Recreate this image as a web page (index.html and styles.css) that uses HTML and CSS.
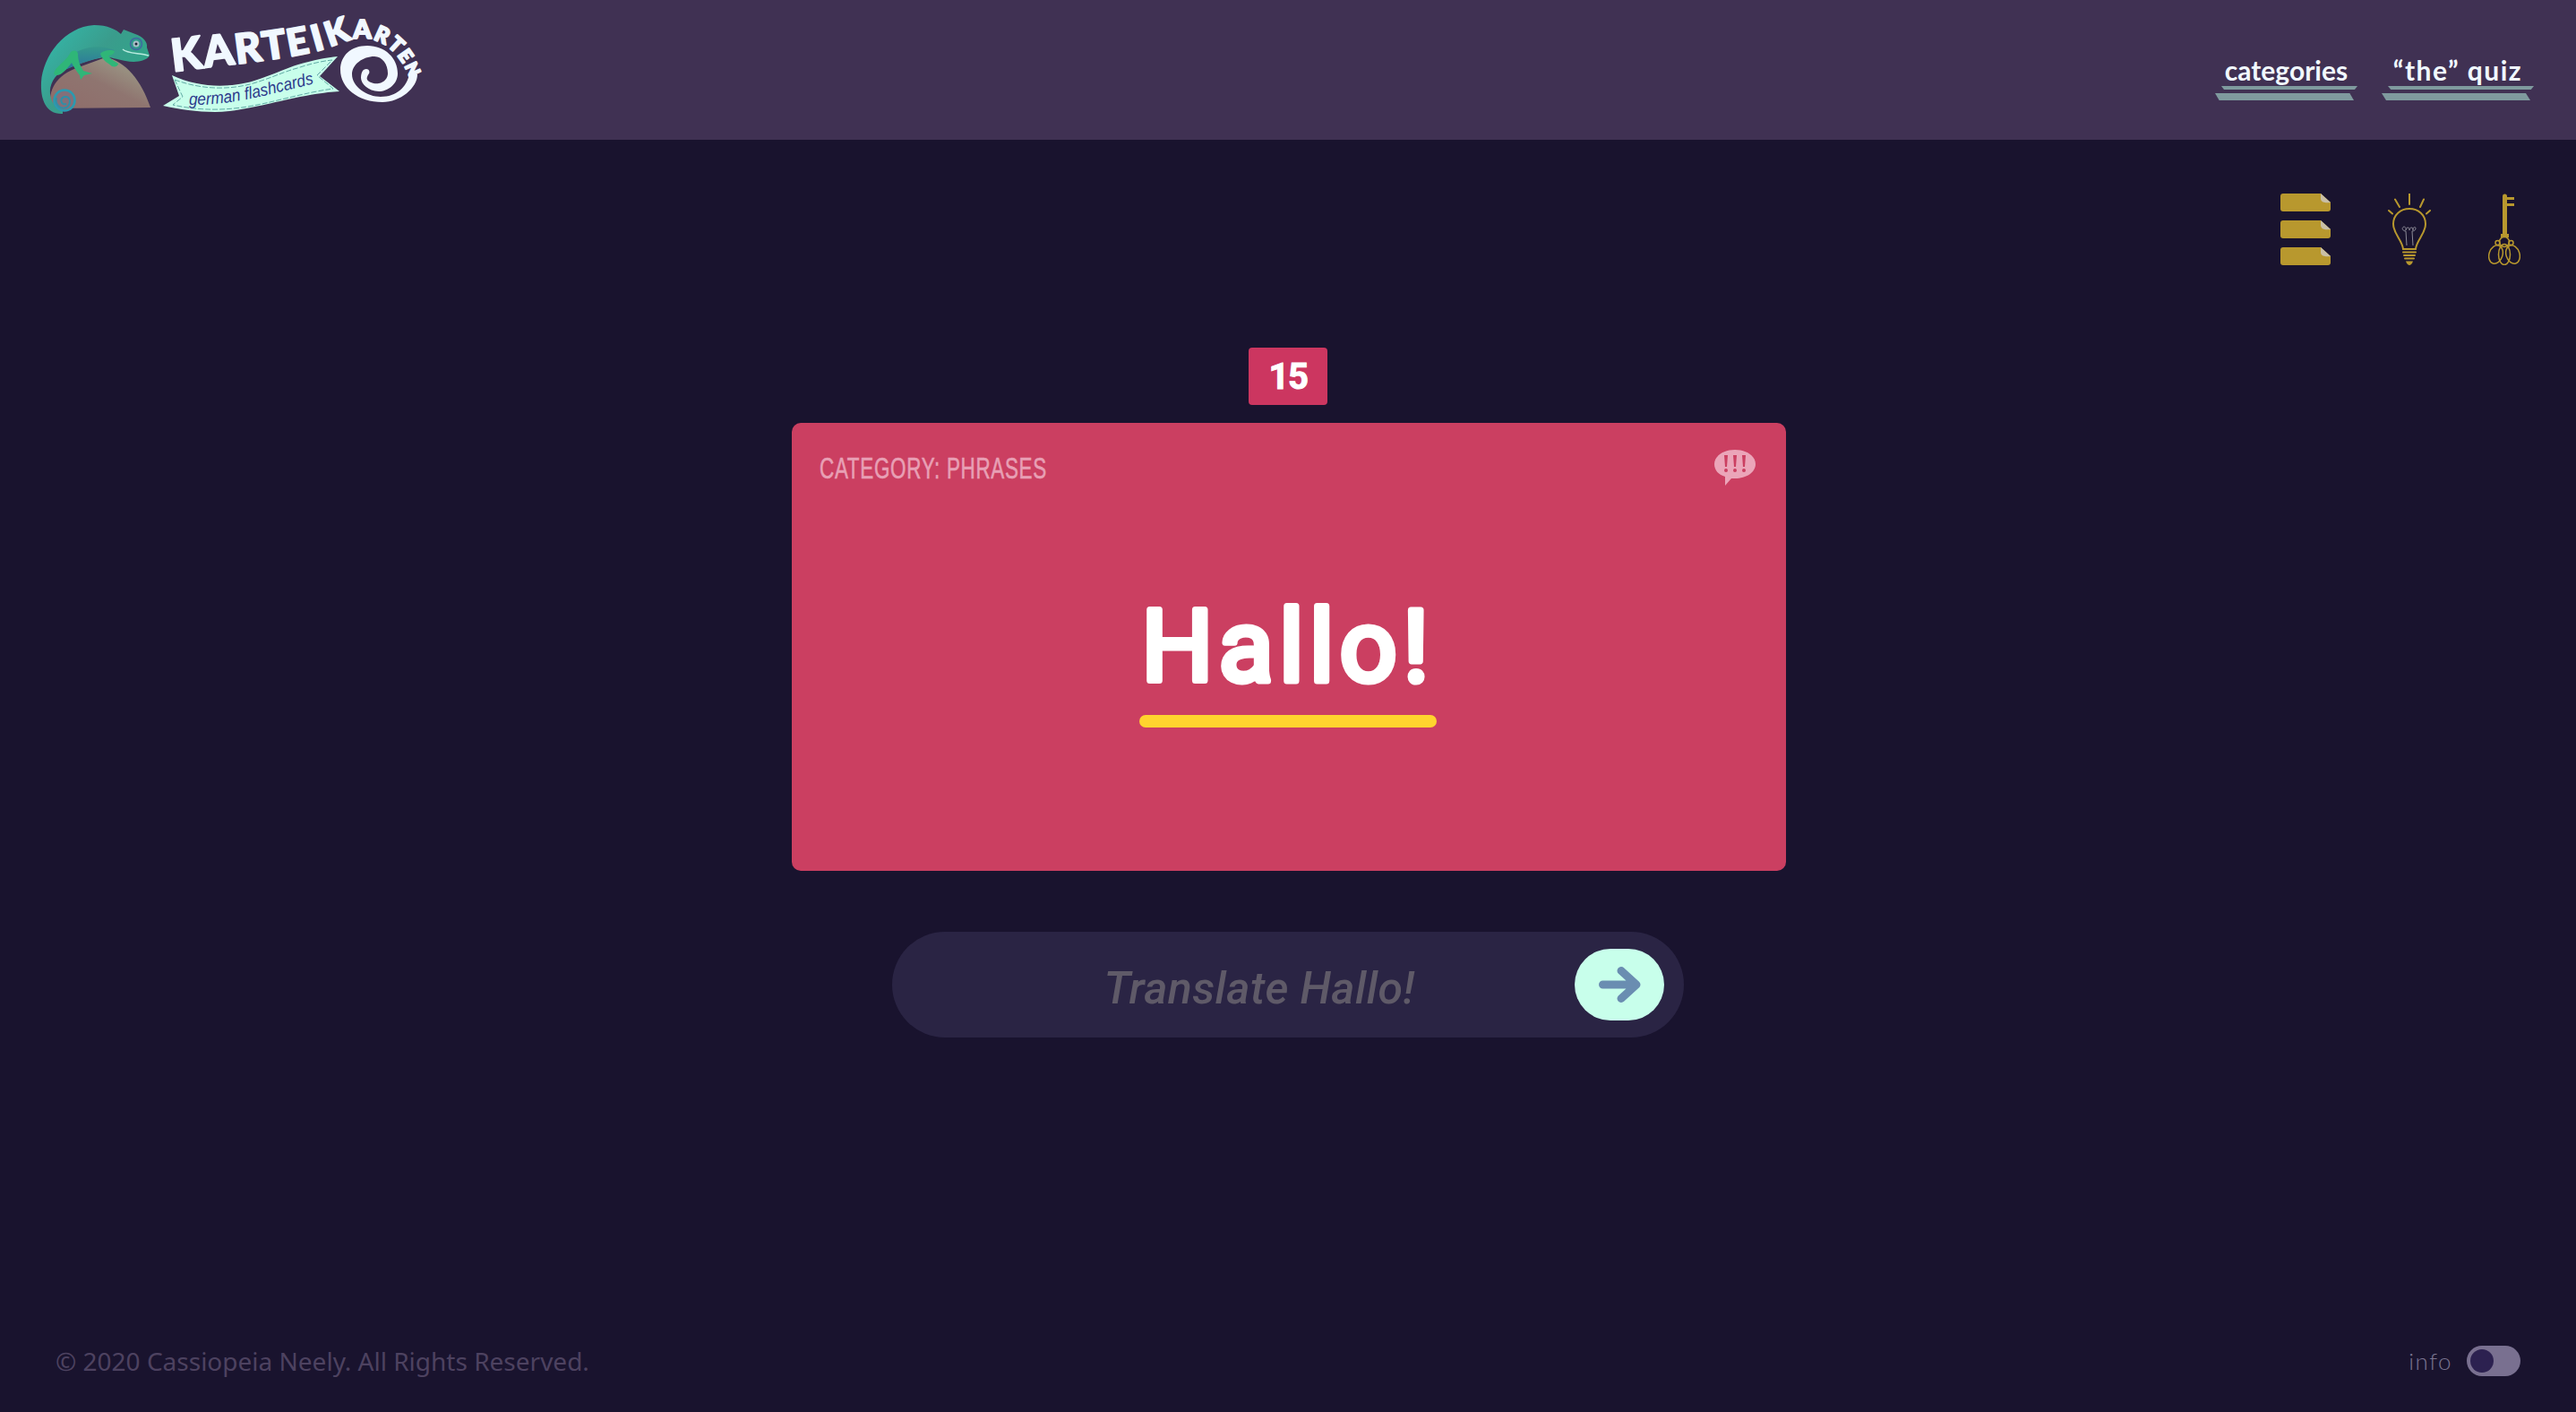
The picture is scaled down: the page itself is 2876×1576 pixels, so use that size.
FILE: index.html
```html
<!DOCTYPE html>
<html lang="de">
<head>
<meta charset="utf-8">
<title>Karteikarten</title>
<link rel="stylesheet" href="styles.css">
</head>
<body>
<header class="site-header">
  <a class="logo" href="#">
    <svg class="logo-svg" viewBox="0 0 520 156" width="520" height="156" aria-label="Karteikarten logo">
      <defs>
        <linearGradient id="rock" x1="0" y1="1" x2="1" y2="0">
          <stop offset="0" stop-color="#8f6c6a"/><stop offset=".5" stop-color="#8f7570"/><stop offset=".75" stop-color="#988f80"/><stop offset="1" stop-color="#8c8070"/>
        </linearGradient>
        <linearGradient id="skin" x1="0" y1="0" x2="1" y2=".7">
          <stop offset="0" stop-color="#33bcae"/><stop offset=".5" stop-color="#3a9c8c"/><stop offset="1" stop-color="#2da888"/>
        </linearGradient>
        <linearGradient id="belly" x1="0" y1="0" x2="0" y2="1">
          <stop offset="0" stop-color="#359a8c"/><stop offset="1" stop-color="#2a6fa0"/>
        </linearGradient>
        <path id="title-path" d="M193 80 C240 74 300 68 340 60 C370 54 380 47 392 45 C415 38 447 48 462 100"/>
        <path id="tag-path" d="M211 117 C260 118 305 104 352 93"/>
      </defs>
      <path class="rock" d="M56 121 C54 100 62 84 88 75 L118 64 C140 68 158 90 168 120 Z"/>
      <path class="chameleon" d="M70 127 C52 128 45 112 46 92 C48 62 72 30 105 28 C120 28 130 33 135 38 L138 33 L151 38 C160 41 165 47 164 53 L167 62 C163 69 150 70 140 68 C128 66 122 63 115 64 C100 67 85 72 72 78 C60 84 55 95 56 105 C57 115 62 120 70 120 Z"/>
      <path class="belly" d="M66 81 C72 56 106 46 128 56 C124 62 118 63 113 64 C100 67 85 72 66 81 Z"/>
      <circle class="tail-curl" cx="72" cy="112" r="11.500"/>
      <path class="tail-line" d="M74 116 C68 118 66 110 72 108 C79 107 80 116 74 120 C66 123 61 115 63 109"/>
      <path class="leg" d="M60 82 C62 74 72 70 78 60 C79 56 86 55 87 60 C87 68 90 74 93 79 L103 82 L94 84 L90 89 L89 84 C84 78 81 72 80 70 C74 78 68 85 62 84 Z"/>
      <path class="leg" d="M112 60 C115 56 125 55 128 57 C128 60 124 62 121 62 C123 66 128 68 132 71 C132 74 128 75 125 74 C120 70 114 67 112 60 Z"/>
      <circle class="eye-ring" cx="152" cy="49" r="6.500"/>
      <circle class="eye-mid" cx="152" cy="49" r="3.500"/>
      <circle class="eye-dot" cx="152" cy="49" r="1.500"/>
      <path class="mouth" d="M137 55 C142 60 155 59 166 62"/>
      <text class="logo-title"><textPath href="#title-path"><tspan font-size="50">K</tspan><tspan font-size="48">A</tspan><tspan font-size="46">R</tspan><tspan font-size="44">T</tspan><tspan font-size="42">E</tspan><tspan font-size="40" dx="4">I</tspan><tspan font-size="38" dx="3">K</tspan><tspan font-size="29">A</tspan><tspan font-size="24">R</tspan><tspan font-size="23">T</tspan><tspan font-size="21">E</tspan><tspan font-size="19" dx="1">N</tspan></textPath></text>
      <path class="spiral" d="M466 83 C466 98 447 114 427 114 C400 114 380 98 380 78 C380 62 392 51 410 51 C430 51 444 65 444 82 C444 94 433 102 423 102 C411 102 403 93 403 87 C403 81 405 77 409 77 C412 77 413 80 412 82 C410 85 409 87 410 89 C412 92 418 94 423 93 C429 92 433 87 433 82 C433 72 427 63 418 63 C405 63 393 72 393 83 C393 97 410 108 425 108 C443 108 454 97 457 83 Z"/>
      <path class="banner" d="M182 118 L200 107 L192 84 C225 100 265 98 293 87 C310 81 320 76 333 72 C350 67 365 64 377 63 L357 85 L379 102 C345 104 310 114 290 118 C270 122 255 125 240 125 C220 125 200 122 182 118 Z"/>
      <path class="banner-stitch" d="M195 89 C230 102 265 100 292 90 C310 84 320 79 332 76 C347 71 360 68 371 67 L354 84 L372 99 C340 103 300 116 270 120 C240 124 215 122 193 117 L204 108 Z"/>
      <text class="logo-tag"><textPath href="#tag-path" textLength="142" lengthAdjust="spacingAndGlyphs">german flashcards</textPath></text>
    </svg>
  </a>
  <nav class="site-nav">
    <a class="nav-link nav-link-categories" href="#">categories</a>
    <a class="nav-link nav-link-quiz" href="#">“the” quiz</a>
  </nav>
</header>

<main class="content">
  <div class="tools">
    <svg class="tool-icon" viewBox="0 0 56 80" width="56" height="80" aria-label="cards">
      <g class="sheet"><path class="sheet-body" d="M3 0H45L56 10V17a3 3 0 0 1-3 3H3a3 3 0 0 1-3-3V3a3 3 0 0 1 3-3z"/><path class="sheet-curl" d="M45 0L56 10C52 10.500 46 11 45 6Z"/></g>
      <g class="sheet" transform="translate(0 30)"><path class="sheet-body" d="M3 0H45L56 10V17a3 3 0 0 1-3 3H3a3 3 0 0 1-3-3V3a3 3 0 0 1 3-3z"/><path class="sheet-curl" d="M45 0L56 10C52 10.500 46 11 45 6Z"/></g>
      <g class="sheet" transform="translate(0 60)"><path class="sheet-body" d="M3 0H45L56 10V17a3 3 0 0 1-3 3H3a3 3 0 0 1-3-3V3a3 3 0 0 1 3-3z"/><path class="sheet-curl" d="M45 0L56 10C52 10.500 46 11 45 6Z"/></g>
    </svg>
    <svg class="tool-icon" viewBox="0 0 48 80" width="48" height="80" aria-label="hint">
      <path class="line" d="M24 0V12M8 6.500L13 15M40 6.500L36 15M1 19L5 22.500M47 19L43 22.500"/>
      <path class="line" d="M17 62C16 52 6 45 6 34C6 24 14 17 24 17C34 17 42 24 42 34C42 45 32 52 31 62Z"/>
      <path class="line" d="M17 65.500H31M18 69H30M19 72.500H29"/>
      <path class="bulb-tip" d="M20 75.500H28C27 79 25 80 24 80C23 80 21 79 20 75.500Z"/>
      <path class="filament" d="M21 58L20 42C17 42 15 39 17 37.500C19 36 21 39 20 41C20 37 25 37 24 41C24 37 29 37 28 41C27 38 31 36 31 39C31 41 29 42 27 42L28 58"/>
    </svg>
    <svg class="tool-icon" viewBox="0 0 36 80" width="36" height="80" aria-label="key">
      <path class="key-solid" d="M16 3a2.500 2.500 0 0 1 5 0V4H29V7H21V11H29V14H21V45H23V49H14V45H16Z"/>
      <g class="key-bow">
        <circle cx="18" cy="54" r="5.500"/><circle cx="10.500" cy="55" r="2.500"/><circle cx="25.500" cy="55" r="2.500"/>
        <ellipse cx="8.500" cy="68" rx="7.500" ry="10.500" transform="rotate(18 8.500 68)"/><ellipse cx="27.500" cy="68" rx="7.500" ry="10.500" transform="rotate(-18 27.500 68)"/><ellipse cx="18" cy="68" rx="6.500" ry="11.500"/>
      </g>
    </svg>
  </div>

  <section class="quiz">
    <div class="counter">15</div>
    <article class="card">
      <div class="card-top">
        <span class="card-category">CATEGORY: PHRASES</span>
        <svg class="speech" viewBox="0 0 46 40" width="46" height="40" aria-label="phrase">
          <path class="speech-bubble" d="M23 0C36 0 46 7 46 16C46 25 36 32 23 32C21 32 20 32 19 32L12 40L12 30C5 28 0 23 0 16C0 7 10 0 23 0Z"/>
          <path class="speech-mark" d="M11 6H15L14 19H12ZM21 6H25L24 19H22ZM31 6H35L34 19H32Z"/>
          <circle class="speech-mark" cx="13" cy="23" r="2"/><circle class="speech-mark" cx="23" cy="23" r="2"/><circle class="speech-mark" cx="33" cy="23" r="2"/>
        </svg>
      </div>
      <div class="word">
        <svg class="word-svg" viewBox="0 0 420 140" width="420" height="140"><text class="word-text" x="210" y="108" text-anchor="middle">Hallo!</text></svg>
        <div class="word-rule"></div>
      </div>
    </article>
    <form class="answer">
      <span class="answer-field">Translate Hallo!</span>
      <button class="answer-go" type="button" aria-label="submit">
        <svg viewBox="0 0 47 40" width="47" height="40"><path class="arrow" d="M4.500 20H41M25 4.500L42 20L25 35.500"/></svg>
      </button>
    </form>
  </section>
</main>

<footer class="site-footer">
  <span class="copyright">© 2020 Cassiopeia Neely. All Rights Reserved.</span>
  <div class="info">
    <span class="info-label">info</span>
    <span class="toggle"><span class="toggle-knob"></span></span>
  </div>
</footer>
</body>
</html>
```

FILE: styles.css
```css
* { box-sizing: border-box; }
html, body { height: 100%; }
body {
  margin: 0;
  min-height: 100vh;
  display: flex;
  flex-direction: column;
  background: #19132e;
  font-family: "Lato", "Noto Sans", sans-serif;
}

/* header */
.site-header {
  height: 156px;
  flex: none;
  display: flex;
  justify-content: space-between;
  align-items: flex-end;
  background: #403153;
  padding: 0 47px 44px 0;
}
.logo { display: block; align-self: flex-start; height: 156px; }
.logo-svg { display: block; }
.rock { fill: url(#rock); }
.chameleon { fill: url(#skin); }
.belly { fill: url(#belly); }
.leg { fill: #2fb678; }
.tail-curl { fill: #83707a; stroke: #2b9ab0; stroke-width: 2.500; }
.tail-line { fill: none; stroke: #2f8fa8; stroke-width: 2; }
.eye-ring { fill: #2f9a8c; stroke: #3f6aa0; stroke-width: 1.500; }
.eye-mid { fill: #a9c0c8; }
.eye-dot { fill: #22263a; }
.mouth { fill: none; stroke: #b9ecdf; stroke-width: 1.500; }
.logo-title {
  font-family: "Lato", sans-serif;
  font-weight: 900;
  fill: #f1f8ff;
  stroke: #f1f8ff;
  stroke-width: 2;
  stroke-linejoin: round;
  letter-spacing: 1.500px;
}
.spiral { fill: #f1f8ff; }
.banner { fill: #c8ffeb; }
.banner-stitch { fill: none; stroke: #5fa9a4; stroke-width: 1; stroke-dasharray: 6 2; }
.logo-tag {
  font-family: "Liberation Sans", sans-serif;
  font-style: italic;
  font-size: 19px;
  fill: #2d3a8c;
}

.site-nav { display: flex; gap: 27px; }
.nav-link {
  position: relative;
  display: block;
  height: 52px;
  line-height: 36px;
  text-align: center;
  color: #f1f8ff;
  text-decoration: none;
  font-family: "Lato", sans-serif;
  font-weight: 700;
  font-size: 30px;
  z-index: 0;
}
.nav-link-categories { width: 159px; }
.nav-link-quiz { width: 170px; letter-spacing: 1.500px; }
.nav-link::before,
.nav-link::after {
  content: "";
  position: absolute;
  background: #7f9a9e;
  z-index: -1;
}
.nav-link::before { left: 7px; right: 0; bottom: 12px; height: 4px; clip-path: polygon(0 0, 100% 0, 98% 100%, 2% 100%); }
.nav-link::after { left: 0; right: 4px; bottom: 0; height: 8px; clip-path: polygon(0 0, 97% 0, 100% 100%, 3% 100%); }

/* main */
.content { flex: 1; display: flex; flex-direction: column; }
.tools {
  display: flex;
  justify-content: flex-end;
  gap: 64px;
  padding: 60px 62px 0 0;
}
.tool-icon { display: block; }
.sheet-body { fill: #b8982e; }
.sheet-curl { fill: #c9bfa6; }
.line { fill: none; stroke: #b8982e; stroke-width: 2; stroke-linecap: round; }
.bulb-tip { fill: #b8982e; }
.filament { fill: none; stroke: #8c8a96; stroke-width: 1; }
.key-solid { fill: #b8982e; }
.key-bow { fill: none; stroke: #b8982e; stroke-width: 1.500; }

.quiz {
  display: flex;
  flex-direction: column;
  align-items: center;
  padding-top: 92px;
}
.counter {
  width: 88px;
  height: 64px;
  background: #cc3660;
  border-radius: 4px;
  text-align: center;
  font-family: "Roboto", sans-serif;
  font-weight: 700;
  font-size: 40px;
  line-height: 66px;
  letter-spacing: -1.500px;
  color: #fff;
  -webkit-text-stroke: 1px #fff;
}

.card {
  width: 1110px;
  height: 500px;
  margin: 20px 0 0 2px;
  background: #cb3f61;
  border-radius: 10px;
  padding: 30px 34px 0 31px;
}
.card-top { display: flex; justify-content: space-between; height: 40px; }
.card-category {
  display: block;
  width: 251px;
  white-space: nowrap;
  font-family: "Liberation Sans", sans-serif;
  font-size: 33px;
  line-height: 42px;
  letter-spacing: 1px;
  color: #e8a0b5;
  -webkit-text-stroke: .6px #e8a0b5;
  transform: scaleX(.68);
  transform-origin: 0 50%;
}
.speech { display: block; }
.speech-bubble { fill: #eba5b9; }
.speech-mark { fill: #cb3f61; }
.word {
  display: flex;
  flex-direction: column;
  align-items: center;
  margin-top: 110px;
}
.word-svg { display: block; }
.word-text {
  font-family: "Roboto", sans-serif;
  font-weight: 400;
  font-size: 112px;
  fill: #fff;
  stroke: #fff;
  stroke-width: 7;
  stroke-linejoin: round;
  letter-spacing: 6.500px;
}
.word-rule {
  width: 332px;
  height: 14px;
  margin-top: 6px;
  background: #ffd42e;
  border-radius: 7px;
}

.answer {
  width: 884px;
  height: 118px;
  margin-top: 68px;
  display: flex;
  align-items: center;
  background: #2a2444;
  border-radius: 59px;
  padding: 0 22px 0 58px;
}
.answer-field {
  flex: 1;
  text-align: center;
  font-family: "Roboto", sans-serif;
  font-style: italic;
  font-weight: 500;
  font-size: 50px;
  letter-spacing: .4px;
  color: #5f5a68;
  padding-top: 8px;
}
.answer-go {
  width: 100px;
  height: 80px;
  margin: 0;
  border: 0;
  padding: 0;
  border-radius: 40px;
  background: #c8ffeb;
  display: flex;
  align-items: center;
  justify-content: center;
}
.arrow { fill: none; stroke: #6a8db1; stroke-width: 9; stroke-linecap: round; stroke-linejoin: round; }

/* footer */
.site-footer {
  flex: none;
  display: flex;
  justify-content: space-between;
  align-items: center;
  padding: 0 62px 38px 62px;
}
.copyright { font-family: "Noto Sans", sans-serif; font-size: 28px; color: #4d4260; }
.info { display: flex; align-items: center; gap: 16px; }
.info-label { font-size: 26px; font-weight: 300; letter-spacing: 1.500px; color: #7a7390; }
.toggle {
  display: flex;
  align-items: center;
  width: 60px;
  height: 34px;
  padding: 0 4px;
  border-radius: 17px;
  background: #797090;
}
.toggle-knob { width: 26px; height: 26px; border-radius: 50%; background: #2c2150; }
```
